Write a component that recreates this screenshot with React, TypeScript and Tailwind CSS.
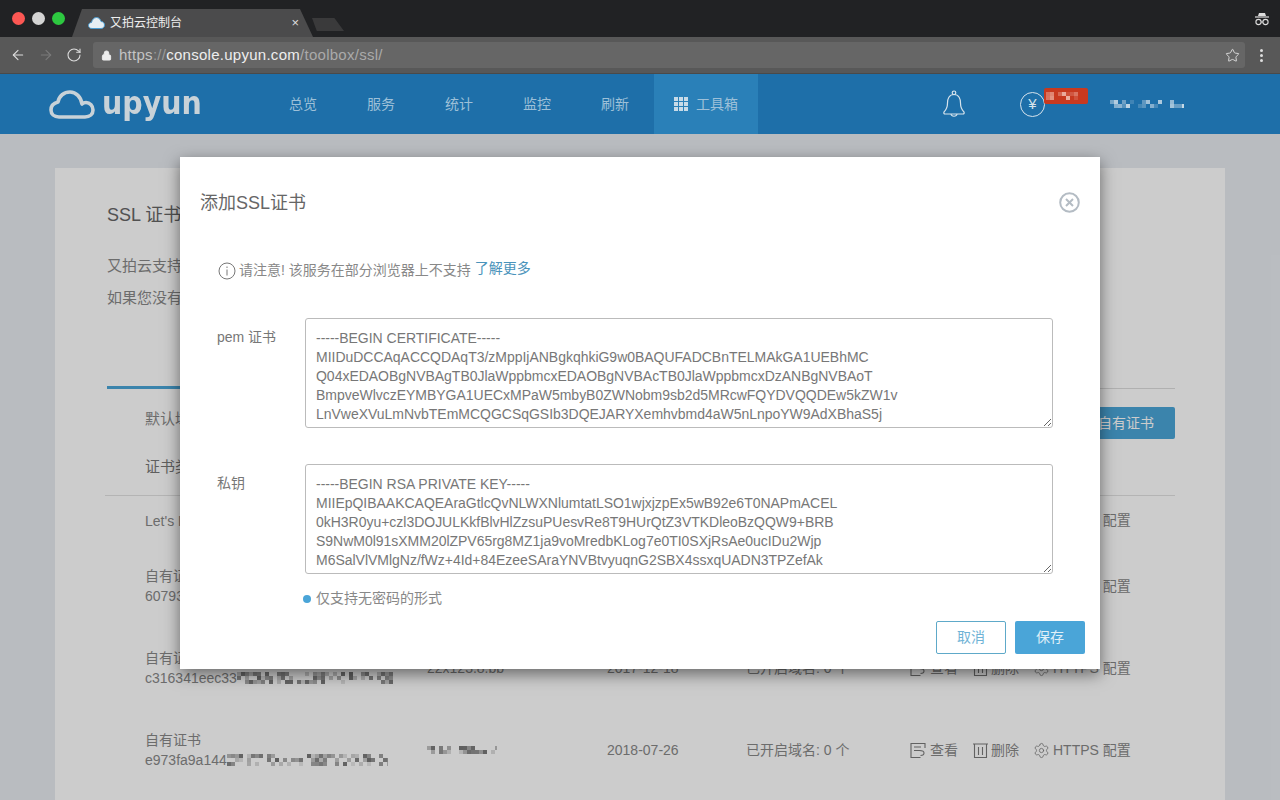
import React from 'react';
import { ArrowLeft, ArrowRight, RotateCw, Lock, Star, Settings } from 'lucide-react';

const FONT = "font-['Liberation_Sans','Noto_Sans_CJK_SC',sans-serif]";

const CERT = `-----BEGIN CERTIFICATE-----
MIIDuDCCAqACCQDAqT3/zMppIjANBgkqhkiG9w0BAQUFADCBnTELMAkGA1UEBhMC
Q04xEDAOBgNVBAgTB0JlaWppbmcxEDAOBgNVBAcTB0JlaWppbmcxDzANBgNVBAoT
BmpveWlvczEYMBYGA1UECxMPaW5mbyB0ZWNobm9sb2d5MRcwFQYDVQQDEw5kZW1v
LnVweXVuLmNvbTEmMCQGCSqGSIb3DQEJARYXemhvbmd4aW5nLnpoYW9AdXBhaS5j`;

const KEY = `-----BEGIN RSA PRIVATE KEY-----
MIIEpQIBAAKCAQEAraGtlcQvNLWXNlumtatLSO1wjxjzpEx5wB92e6T0NAPmACEL
0kH3R0yu+czl3DOJULKkfBlvHlZzsuPUesvRe8T9HUrQtZ3VTKDleoBzQQW9+BRB
S9NwM0l91sXMM20lZPV65rg8MZ1ja9voMredbKLog7e0TI0SXjRsAe0ucIDu2Wjp
M6SalVlVMlgNz/fWz+4Id+84EzeeSAraYNVBtvyuqnG2SBX4ssxqUADN3TPZefAk`;

// 打码的文字：用一排深浅不一的小块表示
const Mosaic = ({ width, color = '#555', height = 12, seed = 7 }: { width: number; color?: string; height?: number; seed?: number }) => {
  const cells = [];
  let s = seed * 7919 + 17;
  for (let x = 0; x < width; x += 4) {
    for (let y = 0; y < height; y += 4) {
      s = (s * 1103515245 + 12345) & 0x7fffffff;
      const r = (s >> 12) % 100;
      if (r < 52) cells.push(<rect key={`${x}-${y}`} x={x} y={y} width="4" height="4" fill={color} opacity={0.15 + (r / 52) * 0.75} />);
    }
  }
  return (
    <svg width={width} height={height} className="shrink-0 blur-[0.4px]">
      {cells}
    </svg>
  );
};

const ViewIcon = () => (
  <svg width="17" height="17" viewBox="0 0 17 17" fill="none" stroke="#7a7a7a" strokeWidth="1.1">
    <path d="M15 6V1.5H1v14h9.5" />
    <path d="M4 5h7M4 8.5h5.5c3 0 4.5 1 4.5 2.5s-1.5 2.5-3.5 2.5" />
  </svg>
);

const TrashIcon = () => (
  <svg width="15" height="17" viewBox="0 0 15 17" fill="none" stroke="#7a7a7a" strokeWidth="1.1">
    <path d="M0 2h15M1.5 2v13.5h12V2M5.5 5v8M9.5 5v8" />
  </svg>
);

const IncognitoIcon = () => (
  <svg width="16" height="16" viewBox="0 0 16 16" fill="none" className="shrink-0">
    <path d="M5 2h6l1 3H4z" fill="#ddd" />
    <path d="M1 6h14" stroke="#ddd" strokeWidth="1.2" />
    <circle cx="4.5" cy="11" r="2.6" stroke="#ddd" strokeWidth="1.1" />
    <circle cx="11.5" cy="11" r="2.6" stroke="#ddd" strokeWidth="1.1" />
    <path d="M7 11h2" stroke="#ddd" strokeWidth="1.1" />
  </svg>
);

const CloudLogo = () => (
  <svg width="46" height="29" viewBox="0 0 46 29" fill="none" stroke="#c8d2d8" strokeWidth="3.6" strokeLinejoin="round">
    <path d="M10 27H36C41 27 44 24 44 20C44 16 41 12.5 37 12.5C35.5 12.5 34 13 33 14C32 7 27 2 21 2C15 2 10 6 9 12C5 13 2 16 2 20C2 24 5 27 10 27Z" />
  </svg>
);

const Favicon = () => (
  <svg width="17" height="12" viewBox="0 0 17 12" className="shrink-0">
    <path d="M4 11.5C1.5 11.5 0.5 10 0.5 8.5C0.5 6.5 2 5.5 3.5 5.5C4 2.5 6 0.5 8.5 0.5C11 0.5 12.5 2.5 13 4.5C15.5 4.5 16.5 6.5 16.5 8C16.5 10 15 11.5 13 11.5Z" fill="#e6eef3" stroke="#4a9bd0" strokeWidth="1" />
  </svg>
);

const GridIcon = () => (
  <svg width="14" height="14" viewBox="0 0 14 14" fill="#c8dbe8" className="shrink-0">
    <rect x="0" y="0" width="4" height="4" />
    <rect x="5" y="0" width="4" height="4" />
    <rect x="10" y="0" width="4" height="4" />
    <rect x="0" y="5" width="4" height="4" />
    <rect x="5" y="5" width="4" height="4" />
    <rect x="10" y="5" width="4" height="4" />
    <rect x="0" y="10" width="4" height="4" />
    <rect x="5" y="10" width="4" height="4" />
    <rect x="10" y="10" width="4" height="4" />
  </svg>
);

const BellIcon = () => (
  <svg width="24" height="28" viewBox="0 0 24 28" fill="none" stroke="#d6e3ec" strokeWidth="1.2" className="shrink-0">
    <circle cx="12" cy="2.8" r="1.8" />
    <path d="M12 4.5C7 4.5 5.5 9 5.5 13C5.5 17 4 20 2 22C1.5 23 2 24 3 24H21C22 24 22.5 23 22 22C20 20 18.5 17 18.5 13C18.5 9 17 4.5 12 4.5Z" />
    <path d="M9 24C9.5 27 14.5 27 15 24" />
  </svg>
);

const Actions = () => (
  <div className="flex items-center text-[#888]">
    <ViewIcon />
    <span className="ml-[3px]">查看</span>
    <span className="ml-[15px] flex"><TrashIcon /></span>
    <span className="ml-[3px]">删除</span>
    <span className="ml-[14px] flex"><Settings size={17} strokeWidth={1.1} color="#7a7a7a" /></span>
    <span className="ml-[3px]">HTTPS 配置</span>
  </div>
);

type Row = { type: string; hash?: string; mosaic?: number; host?: string; hostMosaic?: boolean; date: string; h: string };

const rows: Row[] = [
  { type: "Let's Encrypt", date: '2018-05-02', h: 'h-[49px]' },
  { type: '自有证书', hash: '60793a1c8e2', mosaic: 120, host: 'upyun.com', date: '2018-03-14', h: 'h-[82px]' },
  { type: '自有证书', hash: 'c316341eec33', mosaic: 158, host: '22x123.8.bb', date: '2017-12-18', h: 'h-[82px]' },
  { type: '自有证书', hash: 'e973fa9a144', mosaic: 161, hostMosaic: true, date: '2018-07-26', h: 'h-[82px]' },
];

const NAV = ['总览', '服务', '统计', '监控', '刷新'];

export default function App() {
  return (
    <div className={`relative w-[1280px] h-[800px] overflow-hidden bg-[#e8ecf1] ${FONT}`}>
      {/* 浏览器标签栏 */}
      <div className="flex h-[37px] bg-[#212224] items-end">
        <div className="flex items-center gap-[7px] w-[72px] h-full pl-[12px]">
          <span className="w-[13px] h-[13px] rounded-full bg-[#fc5753]" />
          <span className="w-[13px] h-[13px] rounded-full bg-[#d4d4d4]" />
          <span className="w-[13px] h-[13px] rounded-full bg-[#2dc840]" />
        </div>
        <div className="flex items-center w-[241px] h-[28px] pl-[16px] pr-[16px] bg-[#4b4b4c] [clip-path:polygon(0_100%,10px_0,228px_0,100%_100%)]">
          <Favicon />
          <span className="ml-[5px] text-[12px] text-[#eee]">又拍云控制台</span>
          <span className="ml-auto mr-[-2px] text-[13px] text-[#ddd]">×</span>
        </div>
        <div className="ml-[-1px] mb-[6px] w-[32px] h-[13px] bg-[#3a3a3b] [clip-path:polygon(0_0,70%_0,100%_100%,15%_100%)]" />
        <div className="ml-auto self-center mr-[10px] flex"><IncognitoIcon /></div>
      </div>

      {/* 地址栏 */}
      <div className="flex items-center h-[37px] bg-[#585858] border-b border-[#4a4a4a]">
        <div className="flex items-center w-[93px] pl-[10px] gap-[12px]">
          <ArrowLeft size={16} color="#ddd" strokeWidth={1.6} />
          <ArrowRight size={16} color="#7a7a7a" strokeWidth={1.6} />
          <RotateCw size={16} color="#ddd" strokeWidth={1.6} />
        </div>
        <div className="flex items-center w-[1152px] h-[26px] rounded-[3px] bg-[#666666] pl-[8px] pr-[5px] text-[15px] tracking-[0.27px]">
          <Lock size={11} color="#eee" fill="#eee" />
          <span className="ml-[7px] text-[#c4c4c4]">https</span>
          <span className="text-[#9a9a9a]">://</span>
          <span className="text-[#eee]">console.upyun.com</span>
          <span className="text-[#aaa]">/toolbox/ssl/</span>
          <Star size={15} color="#ddd" strokeWidth={1.5} className="ml-auto" />
        </div>
        <div className="flex flex-col gap-[2px] ml-[15px]">
          <span className="w-[3px] h-[3px] rounded-full bg-[#ddd]" />
          <span className="w-[3px] h-[3px] rounded-full bg-[#ddd]" />
          <span className="w-[3px] h-[3px] rounded-full bg-[#ddd]" />
        </div>
      </div>

      {/* 顶部导航 */}
      <div className="flex items-center h-[60px] bg-[#1e6fa9] relative">
        <div className="flex items-center ml-[49px] w-[215px] gap-[7px]">
          <CloudLogo />
          <span className="font-['DejaVu_Sans',sans-serif] font-bold text-[28.5px] leading-none scale-y-[1.12] text-[#c8d2d8]">upyun</span>
        </div>
        {NAV.map((n) => (
          <span key={n} className="px-[25px] text-[14px] text-[#9dc0d8]">{n}</span>
        ))}
        <div className="flex items-center gap-[8px] h-full w-[104px] pl-[20px] bg-[#2a80b8] text-[14px] text-[#9dc0d8]">
          <GridIcon />
          工具箱
        </div>
        <div className="ml-[184px] flex"><BellIcon /></div>
        <div className="relative ml-[54px] w-[25px] h-[25px] rounded-full border border-[#d6e3ec] flex items-center justify-center text-[#d6e3ec] text-[15px]">
          ¥
          <div className="absolute left-[23px] top-[-5px] w-[44px] h-[16px] rounded-[2px] bg-[#c8391f] flex items-center pl-[2px] overflow-hidden">
            <Mosaic width={38} color="#f3c7bb" height={8} seed={3} />
          </div>
        </div>
        <div className="ml-[65px] flex"><Mosaic width={74} color="#dbe6ee" height={8} seed={5} /></div>
      </div>

      {/* 页面内容 */}
      <div className="mx-[55px] mt-[34px] bg-white h-[700px] text-[14px] text-[#888]">
        <div className="pl-[52px] pr-[50px] pt-[36px]">
          <div className="text-[18px] leading-[22px] text-[#666]">SSL 证书</div>
          <div className="mt-[24px] text-[15px] leading-[32px] text-[#888]">
            <p>又拍云支持</p>
            <p>如果您没有</p>
          </div>
          <div className="mt-[72px] border-b border-[#ddd] h-[3px]">
            <div className="w-[200px] h-[3px] bg-[#4aa5d8]" />
          </div>
          <div className="flex items-center justify-between h-[32px] mt-[18px] pl-[38px]">
            <span className="mb-[8px] text-[15px]">默认域名证书</span>
            <button className="h-[32px] w-[120px] rounded-[2px] bg-[#4aa5d8] text-white text-right pr-[21px]">上传自有证书</button>
          </div>
        </div>
        <div className="mx-[50px] flex items-center h-[57px] pl-[40px] border-b border-[#e2e2e2] text-[15px] text-[#777]">证书类型</div>
        <div className="mx-[50px]">
          {rows.map((r, i) => (
            <div key={i} className={`flex items-center pl-[40px] ${r.h}`}>
              <div className="w-[282px] shrink-0 leading-[20px]">
                <div>{r.type}</div>
                {r.hash && (
                  <div className="flex items-center">
                    <span>{r.hash}</span>
                    {r.mosaic && <Mosaic width={r.mosaic} color="#666" seed={i + 2} />}
                  </div>
                )}
              </div>
              <div className="w-[180px] shrink-0">
                {r.hostMosaic ? <Mosaic width={70} color="#666" height={8} seed={9} /> : r.host}
              </div>
              <div className="w-[139px] shrink-0">{r.date}</div>
              <div className="w-[164px] shrink-0">已开启域名: 0 个</div>
              <Actions />
            </div>
          ))}
        </div>
      </div>

      {/* 遮罩 */}
      <div className="absolute left-0 right-0 top-[134px] bottom-0 bg-black/20" />

      {/* 弹窗 */}
      <div className="absolute left-[180px] top-[157px] w-[920px] h-[512px] bg-white shadow-[0_5px_15px_rgba(0,0,0,0.5)] text-[14px] text-[#777]">
        <div className="flex items-center justify-between h-[91px] pl-[20px] pr-[20px]">
          <span className="text-[18px] text-[#666] mt-[2px]">添加SSL证书</span>
          <svg width="21" height="21" viewBox="0 0 21 21" fill="none" stroke="#b4bcc4" strokeWidth="2" className="mb-[1px]">
            <circle cx="10.5" cy="10.5" r="9.3" />
            <path d="M7 7l7 7M14 7l-7 7" />
          </svg>
        </div>
        <div className="flex items-center ml-[38px] mt-[12px] text-[#888]">
          <svg width="18" height="18" viewBox="0 0 18 18" fill="none" stroke="#777" strokeWidth="1">
            <circle cx="9" cy="9" r="8" />
            <path d="M9 7.5v6M9 4.5v1.5" />
          </svg>
          <span className="ml-[3px]">请注意! 该服务在部分浏览器上不支持</span>
          <a className="ml-[4px] text-[#4a93bb] mt-[-4px]">了解更多</a>
        </div>
        <div className="flex mt-[37px] pl-[37px]">
          <label className="w-[88px] pt-[10px] leading-[19px]">pem 证书</label>
          <textarea readOnly value={CERT} className="w-[748px] h-[110px] py-[10px] pl-[10px] pr-[4px] border border-[#bbb] rounded-[3px] text-[14px] leading-[19px] tracking-[-0.02px] text-[#777] overflow-hidden whitespace-pre outline-none" />
        </div>
        <div className="flex mt-[36px] pl-[37px]">
          <label className="w-[88px] pt-[10px] leading-[19px]">私钥</label>
          <textarea readOnly value={KEY} className="w-[748px] h-[110px] py-[10px] pl-[10px] pr-[4px] border border-[#bbb] rounded-[3px] text-[14px] leading-[19px] tracking-[-0.02px] text-[#777] overflow-hidden whitespace-pre outline-none" />
        </div>
        <div className="flex items-center ml-[123px] mt-[14px] text-[#888]">
          <span className="w-[8px] h-[8px] rounded-full bg-[#4aa5d8]" />
          <span className="ml-[5px]">仅支持无密码的形式</span>
        </div>
        <div className="flex justify-end gap-[9px] pr-[15px] mt-[12px]">
          <button className="w-[70px] h-[33px] rounded-[2px] border border-[#5ea9c9] text-[#6fb3d6] text-[14px]">取消</button>
          <button className="w-[70px] h-[33px] rounded-[2px] bg-[#4aa5d8] text-[#e0f0f8] text-[14px]">保存</button>
        </div>
      </div>
    </div>
  );
}
